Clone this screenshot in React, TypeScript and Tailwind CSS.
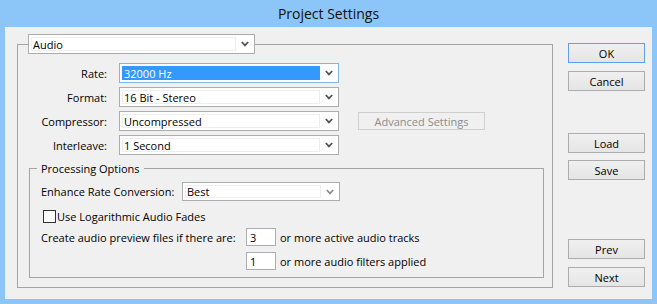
import React from 'react';

function Chevron({ light }: { light?: boolean }) {
  return (
    <svg width="8" height="6" viewBox="0 0 8 6">
      <path
        d="M0.8 1 L4 4.4 L7.2 1"
        fill="none"
        stroke={light ? '#8c8c8c' : '#505050'}
        strokeWidth="1.7"
      />
    </svg>
  );
}

function Select({
  value,
  className,
  selected,
  light,
}: {
  value: string;
  className: string;
  selected?: boolean;
  light?: boolean;
}) {
  return (
    <div
      className={`flex items-stretch border bg-white ${
        selected ? 'border-[#7eb4ea]' : 'border-[#acacac]'
      } ${className}`}
    >
      <div
        className={`m-[2px] mr-0 flex flex-1 items-center border pl-[1px] ${
          selected ? 'border-[#3399ff] bg-[#3399ff] text-white' : 'border-[#eeeeee] bg-white'
        }`}
      >
        {value}
      </div>
      <div className="flex w-[18px] items-center justify-center">
        <Chevron light={light} />
      </div>
    </div>
  );
}

function Button({ label, className, primary }: { label: string; className: string; primary?: boolean }) {
  return (
    <div
      className={`flex h-[20px] items-center justify-center border bg-linear-to-b from-[#f0f0f0] to-[#e5e5e5] ${
        primary ? 'border-[#5aa2ec]' : 'border-[#acacac]'
      } ${className}`}
    >
      {label}
    </div>
  );
}

function Row({ label, children, className }: { label: string; children: React.ReactNode; className: string }) {
  return (
    <div className={`flex h-[20px] items-center ${className}`}>
      <span className="w-[89px] text-right">{label}</span>
      {children}
    </div>
  );
}

export default function App() {
  return (
    <div className="flex h-[304px] w-[657px] flex-col bg-[#8cc5f7] px-[5px] pb-[5px] font-['Open_Sans',sans-serif] text-[11px] leading-[15px] text-black">
      <div className="flex h-[27px] items-center justify-center text-[14px] text-[#111111]">Project Settings</div>

      <div className="flex flex-1 bg-[#f0f0f0]">
        <fieldset className="ml-[12px] mt-[7px] h-[254px] w-[536px] border border-[#a5a5a5]">
          <legend className="ml-[10px]">
            <Select value="Audio" className="h-[20px] w-[227px]" />
          </legend>

          <Row label="Rate:" className="mt-[9px]">
            <Select value="32000 Hz" selected className="ml-[12px] h-[20px] w-[220px]" />
          </Row>
          <Row label="Format:" className="mt-[4px]">
            <Select value="16 Bit - Stereo" className="ml-[12px] h-[20px] w-[220px]" />
          </Row>
          <Row label="Compressor:" className="mt-[4px]">
            <Select value="Uncompressed" className="ml-[12px] h-[20px] w-[220px]" />
            <div className="ml-[19px] flex h-[18px] w-[127px] items-center justify-center border border-[#cfcfcf] bg-[#f0f0f0] text-[#8b8b8b]">
              Advanced Settings
            </div>
          </Row>
          <Row label="Interleave:" className="mt-[4px]">
            <Select value="1 Second" className="ml-[12px] h-[20px] w-[220px]" />
          </Row>

          <fieldset className="ml-[11px] mt-[6px] h-[117px] w-[515px] border border-[#a5a5a5] pl-[11px]">
            <legend className="ml-[-4px] px-[4px]">Processing Options</legend>

            <div className="mt-[6px] flex h-[19px] items-center">
              <span className="w-[141px]">Enhance Rate Conversion:</span>
              <Select value="Best" light className="h-[19px] w-[158px]" />
            </div>

            <div className="mt-[9px] flex h-[13px] items-center">
              <div className="ml-[2px] h-[13px] w-[13px] border border-[#333333] bg-white" />
              <span className="ml-[1px]">Use Logarithmic Audio Fades</span>
            </div>

            <div className="mt-[5px] flex h-[18px] items-center">
              <span className="w-[205px]">Create audio preview files if there are:</span>
              <div className="flex h-[18px] w-[30px] items-center border border-[#abadb3] bg-white pl-[3px]">3</div>
              <span className="ml-[4px]">or more active audio tracks</span>
            </div>

            <div className="mt-[6px] flex h-[18px] items-center">
              <span className="w-[205px]" />
              <div className="flex h-[18px] w-[30px] items-center border border-[#abadb3] bg-white pl-[3px]">1</div>
              <span className="ml-[4px]">or more audio filters applied</span>
            </div>
          </fieldset>
        </fieldset>

        <div className="ml-[15px] flex w-[77px] flex-col">
          <Button label="OK" primary className="mt-[16px]" />
          <Button label="Cancel" className="mt-[8px]" />
          <Button label="Load" className="mt-[42px]" />
          <Button label="Save" className="mt-[7px]" />
          <Button label="Prev" className="mt-[59px]" />
          <Button label="Next" className="mt-[8px]" />
        </div>
      </div>
    </div>
  );
}
